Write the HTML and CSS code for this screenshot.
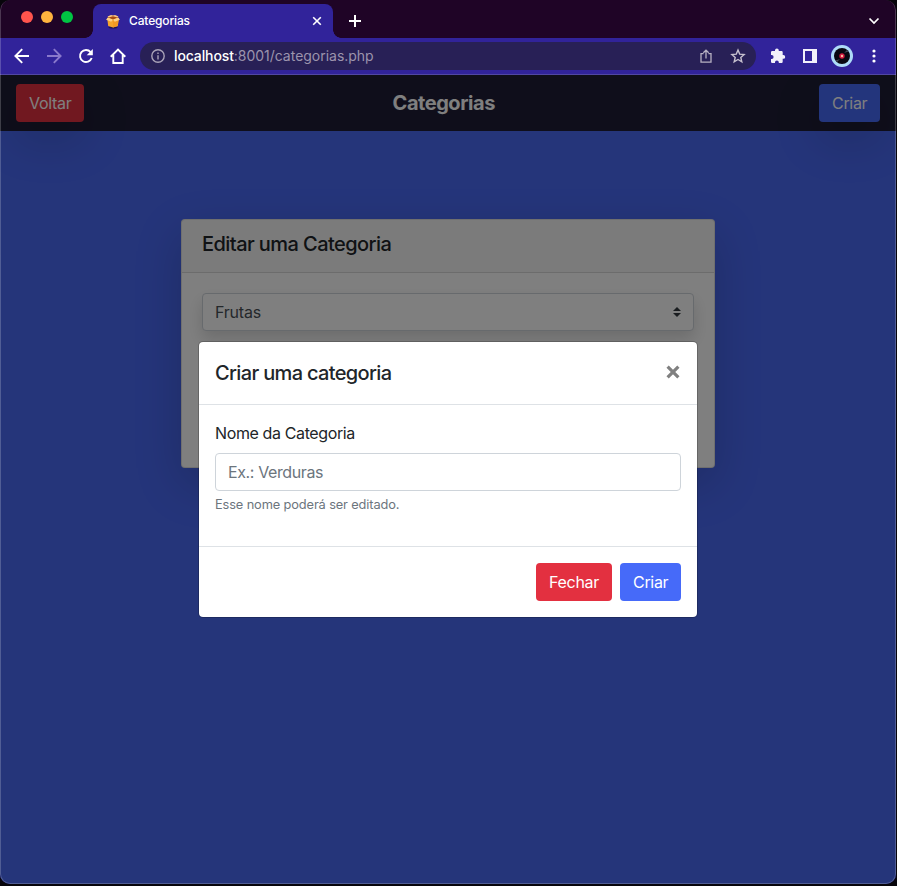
FILE: index.html
```html
<!DOCTYPE html>
<html lang="pt-BR">
<head>
<meta charset="utf-8">
<title>Categorias</title>
<link rel="stylesheet" href="styles.css">
</head>
<body>
<div class="window">
  <div class="tabstrip">
    <div class="lights"><i class="light red"></i><i class="light amber"></i><i class="light green"></i></div>
    <div class="tab">
      <svg class="favicon" width="14" height="15" viewBox="0 0 14 15"><ellipse cx="7" cy="13.6" rx="4.5" ry="1" fill="#20144e"/><path d="M1.2 4h11.6l-1 8L7 13.6 2.2 12z" fill="#f6a52b"/><path d="M7 6v7.6l4.8-1.6.9-7z" fill="#f39a22"/><path d="M1.5 3.6 7 1.6l5.5 2L7 6z" fill="#a94d12"/><path d="M1.8 3.4.1 5.8 5.2 7.8 7 5.6zM12.2 3.4l1.7 2.4L8.8 7.8 7 5.6z" fill="#ffd083"/><path d="M1.5 2.6 5 1l2 .6L9 1l3.5 1.6-1.2.8L7 2.2 2.7 3.4z" fill="#ffc982"/></svg>
      <span class="tab-title">Categorias</span>
      <svg class="tab-close" width="10" height="10" viewBox="0 0 10 10" fill="none" stroke="#fff" stroke-width="1.6"><path d="m1.2 1.2 7.6 7.6M8.8 1.2 1.2 8.8"/></svg>
    </div>
    <svg class="plus" width="12" height="12" viewBox="0 0 12 12" stroke="#fff" stroke-width="2"><path d="M6 0v12M0 6h12"/></svg>
    <svg class="chevron" width="12" height="8" viewBox="0 0 12 8" fill="none" stroke="#fff" stroke-width="1.7"><path d="m1.5 1.5 4.5 4.5 4.5-4.5"/></svg>
  </div>
  <div class="toolbar">
    <svg class="nav" width="16" height="16" viewBox="0 0 16 16" fill="none" stroke="#fff" stroke-width="1.9"><path d="M15 8H2M8.2 1.2 1.4 8l6.8 6.8"/></svg>
    <svg class="nav" width="16" height="16" viewBox="0 0 16 16" fill="none" stroke="#8a79cc" stroke-width="1.9"><path d="M1 8h13M7.8 1.2 14.6 8l-6.8 6.8"/></svg>
    <svg class="nav" width="16" height="16" viewBox="0 0 16 16" fill="none" stroke="#fff" stroke-width="1.9"><path d="M13.7 10A6 6 0 1 1 12.6 4.1"/><path d="M14.8 1v6.2H8.7z" fill="#fff" stroke="none"/></svg>
    <svg class="nav" width="16" height="16" viewBox="0 0 16 16" fill="none" stroke="#fff" stroke-width="1.9"><path d="M.7 8.7 8 1.5l7.3 7.2M3.3 7v8h9.4V7"/></svg>
    <div class="address">
      <svg width="14" height="14" viewBox="0 0 14 14" fill="none" stroke="#aaa3b8" stroke-width="1.4"><circle cx="7" cy="7" r="6.2"/><path d="M7 6.2v4.2M7 3.5V5"/></svg>
      <span class="url"><b>localhost</b>:8001/categorias.php</span>
      <svg class="share" width="12" height="14" viewBox="0 0 12 14" fill="none" stroke="#b7b1c2" stroke-width="1.3"><path d="M3.5 4.7H1v8.5h10V4.7H8.5M6 9.5V1.4M3.3 3.8 6 1.2l2.7 2.6"/></svg>
      <svg width="16" height="16" viewBox="0 0 16 16" fill="none" stroke="#c7c1cf" stroke-width="1.4"><path d="m8 2 1.7 4.1 4.4.4-3.3 2.9 1 4.4L8 11.5l-3.8 2.3 1-4.4-3.3-2.9 4.4-.4z"/></svg>
    </div>
    <svg class="puzzle" width="16" height="16" viewBox="0 0 16 16" fill="#f2f0fa"><path d="M1 4.2Q1 3 2.2 3H5v-.6a1.9 1.9 0 0 1 3.8 0V3h2.7q1.2 0 1.2 1.2V7h.6a1.9 1.9 0 0 1 0 3.8h-.6v2.9q0 1.2-1.2 1.2H8.8v-.6a1.9 1.9 0 0 0-3.8 0v.6H2.2Q1 14.900 1 13.700V11h.6a2 2 0 0 0 0-4H1z"/></svg>
    <svg class="panel" width="14" height="14" viewBox="0 0 14 14"><path d="M0 0h14v14H0zM2 2v10h7V2z" fill="#f2f0fa" fill-rule="evenodd"/></svg>
    <svg class="avatar" width="22" height="22" viewBox="0 0 22 22"><circle cx="11" cy="11" r="11" fill="#aedcf8"/><circle cx="11" cy="11" r="8" fill="#080811"/><path d="m13 8 3-3 1.5 1.5zM9 14l-3 3-1.5-1.5z" fill="#454957"/><circle cx="11" cy="11" r="2.7" fill="#cf193f"/><circle cx="11" cy="11" r="1.2" fill="#ffb99c"/></svg>
    <svg class="dots" width="4" height="14" viewBox="0 0 4 14" fill="#fff"><circle cx="2" cy="2" r="1.6"/><circle cx="2" cy="7" r="1.6"/><circle cx="2" cy="12" r="1.6"/></svg>
  </div>
  <main class="page">
    <header class="navbar">
      <button class="btn danger shadow">Voltar</button>
      <h1 class="brand">Categorias</h1>
      <button class="btn primary shadow">Criar</button>
    </header>
    <section class="card">
      <div class="card-header"><h2 class="title card-title">Editar uma Categoria</h2></div>
      <div class="card-body">
        <div class="select"><span>Frutas</span><svg width="8" height="10" viewBox="0 0 8 10" fill="#343a40"><path d="M0 4 4 0l4 4zM0 6h8l-4 4z"/></svg></div>
      </div>
    </section>
    <div class="backdrop">
      <div class="modal">
        <div class="modal-header"><h2 class="title modal-title">Criar uma categoria</h2>
          <svg class="modal-close" width="14" height="14" viewBox="0 0 14 14" stroke="#808080" stroke-width="3.2"><path d="m1.6 1.6 10.8 10.800M12.400 1.600 1.600 12.400"/></svg></div>
        <div class="modal-body">
          <label class="label" for="nome">Nome da Categoria</label>
          <input class="input" id="nome" placeholder="Ex.: Verduras">
          <small class="help">Esse nome poderá ser editado.</small>
        </div>
        <div class="modal-footer"><button class="btn danger">Fechar</button><button class="btn primary">Criar</button></div>
      </div>
    </div>
  </main>
  <div class="frame"></div>
</div>
</body>
</html>
```
FILE: styles.css
```css
* { box-sizing: border-box; }
body { margin: 0; height: 886px; overflow: hidden; background: #07050b; font: 400 16px/24px Inter, "Liberation Sans", sans-serif; color: #212529; }
h1, h2 { margin: 0; }
svg { display: block; flex: none; }
.window { position: relative; width: 896px; height: 884px; border-radius: 10px; overflow: hidden; background: #1f0426; }
.frame { position: absolute; inset: 0; border: 1px solid rgba(255,255,255,.2); border-top: 0; border-radius: 10px; pointer-events: none; }
.tabstrip { display: flex; height: 38px; align-items: center; padding: 4px 16px 0 21px; }
.lights { display: flex; gap: 8px; width: 72px; margin-top: -8px; }
.light { width: 12px; height: 12px; border-radius: 50%; }
.red { background: #ff544d; }
.amber { background: #ffb43e; }
.green { background: #00c543; }
.tab { position: relative; display: flex; align-items: center; width: 240px; height: 34px; padding: 0 11px 0 13px; border-radius: 8px 8px 0 0; background: #31239a; color: #fff; }
.tab::before, .tab::after { content: ""; position: absolute; bottom: 0; width: 8px; height: 8px; }
.tab::before { left: -8px; background: radial-gradient(circle at 0 0, transparent 7.5px, #31239a 8px); }
.tab::after { right: -8px; background: radial-gradient(circle at 100% 0, transparent 7.5px, #31239a 8px); }
.tab-title { margin-left: 9px; font-size: 12px; font-weight: 500; line-height: 16px; letter-spacing: -.15px; margin-top: -1px; }
.tab-close { margin-left: auto; }
.plus { margin-left: 16px; }
.chevron { margin-left: auto; }
.toolbar { display: flex; align-items: center; height: 37px; padding: 0 20px 1px 14px; border-bottom: 1px solid #5147a4; background: #31239a; }
.nav { margin-right: 16px; }
.address { display: flex; align-items: center; width: 616px; height: 28px; margin-left: -2px; padding: 0 10px 0 11px; border-radius: 14px; background: #282056; }
.url { margin-left: 9px; font-size: 14px; color: #9c94ad; letter-spacing: -.02px; }
.url b { font-weight: 500; color: #fff; letter-spacing: -.12px; }
.share { margin: 0 18px 0 auto; }
.puzzle { margin-left: 14px; }
.panel { margin-left: 17px; }
.avatar { margin-left: 14px; }
.dots { margin-left: auto; }
.page { position: relative; height: 809px; background: #4a6af5; overflow: hidden; }
.navbar { display: flex; justify-content: space-between; align-items: center; height: 56px; padding: 0 16px; background: #1e1d36; }
.brand { margin-right: 16px; font-size: 20px; line-height: 30px; font-weight: 700; color: #fff; letter-spacing: -.45px; }
.btn { height: 38px; padding: 0 13px; border: 0; border-radius: 4px; font: inherit; color: #fff; letter-spacing: -.3px; }
.danger { background: #e33040; }
.primary { width: 61px; background: #466af9; }
.shadow { box-shadow: 0 16px 48px rgba(0,0,0,.175); }
.card { width: 534px; height: 249px; margin: 88px 0 0 181px; border: 1px solid rgba(0,0,0,.125); border-radius: 4px; background: #fff; box-shadow: 0 16px 48px rgba(0,0,0,.175); }
.card-header { height: 53px; padding: 12px 20px; border-bottom: 1px solid rgba(0,0,0,.125); background: rgba(0,0,0,.03); }
.title { font-size: 20px; line-height: 24px; font-weight: 500; }
.card-title { letter-spacing: -.56px; }
.modal-title { letter-spacing: -.66px; }
.card-body { padding: 20px; }
.select { display: flex; align-items: center; justify-content: space-between; height: 38px; padding: 0 12px; border: 1px solid #ced4da; border-radius: 4px; color: #495057; background: #fff; box-shadow: 0 8px 16px rgba(0,0,0,.15); letter-spacing: -.2px; }
.backdrop { position: absolute; inset: 0; display: flex; align-items: center; justify-content: center; background: rgba(0,0,0,.5); }
.modal { width: 500px; height: 277px; border: 1px solid rgba(0,0,0,.2); border-radius: 5px; background: #fff; background-clip: padding-box; }
.modal-header { display: flex; align-items: center; justify-content: space-between; height: 63px; padding: 0 17px 0 16px; border-bottom: 1px solid #dee2e6; }
.modal-close { margin-top: -2px; }
.modal-body { height: 141px; padding: 16px; }
.label { display: block; margin-bottom: 8px; letter-spacing: -.38px; }
.input { display: block; width: 100%; height: 38px; padding: 0 12px; border: 1px solid #ced4da; border-radius: 4px; font: inherit; letter-spacing: -.38px; }
.input::placeholder { color: #6c757d; opacity: 1; }
.help { display: block; margin-top: 4px; font-size: 12.8px; line-height: 19px; color: #6c757d; letter-spacing: -.12px; }
.modal-footer { display: flex; justify-content: flex-end; gap: 8px; height: 71px; padding: 16px; border-top: 1px solid #dee2e6; }
```
